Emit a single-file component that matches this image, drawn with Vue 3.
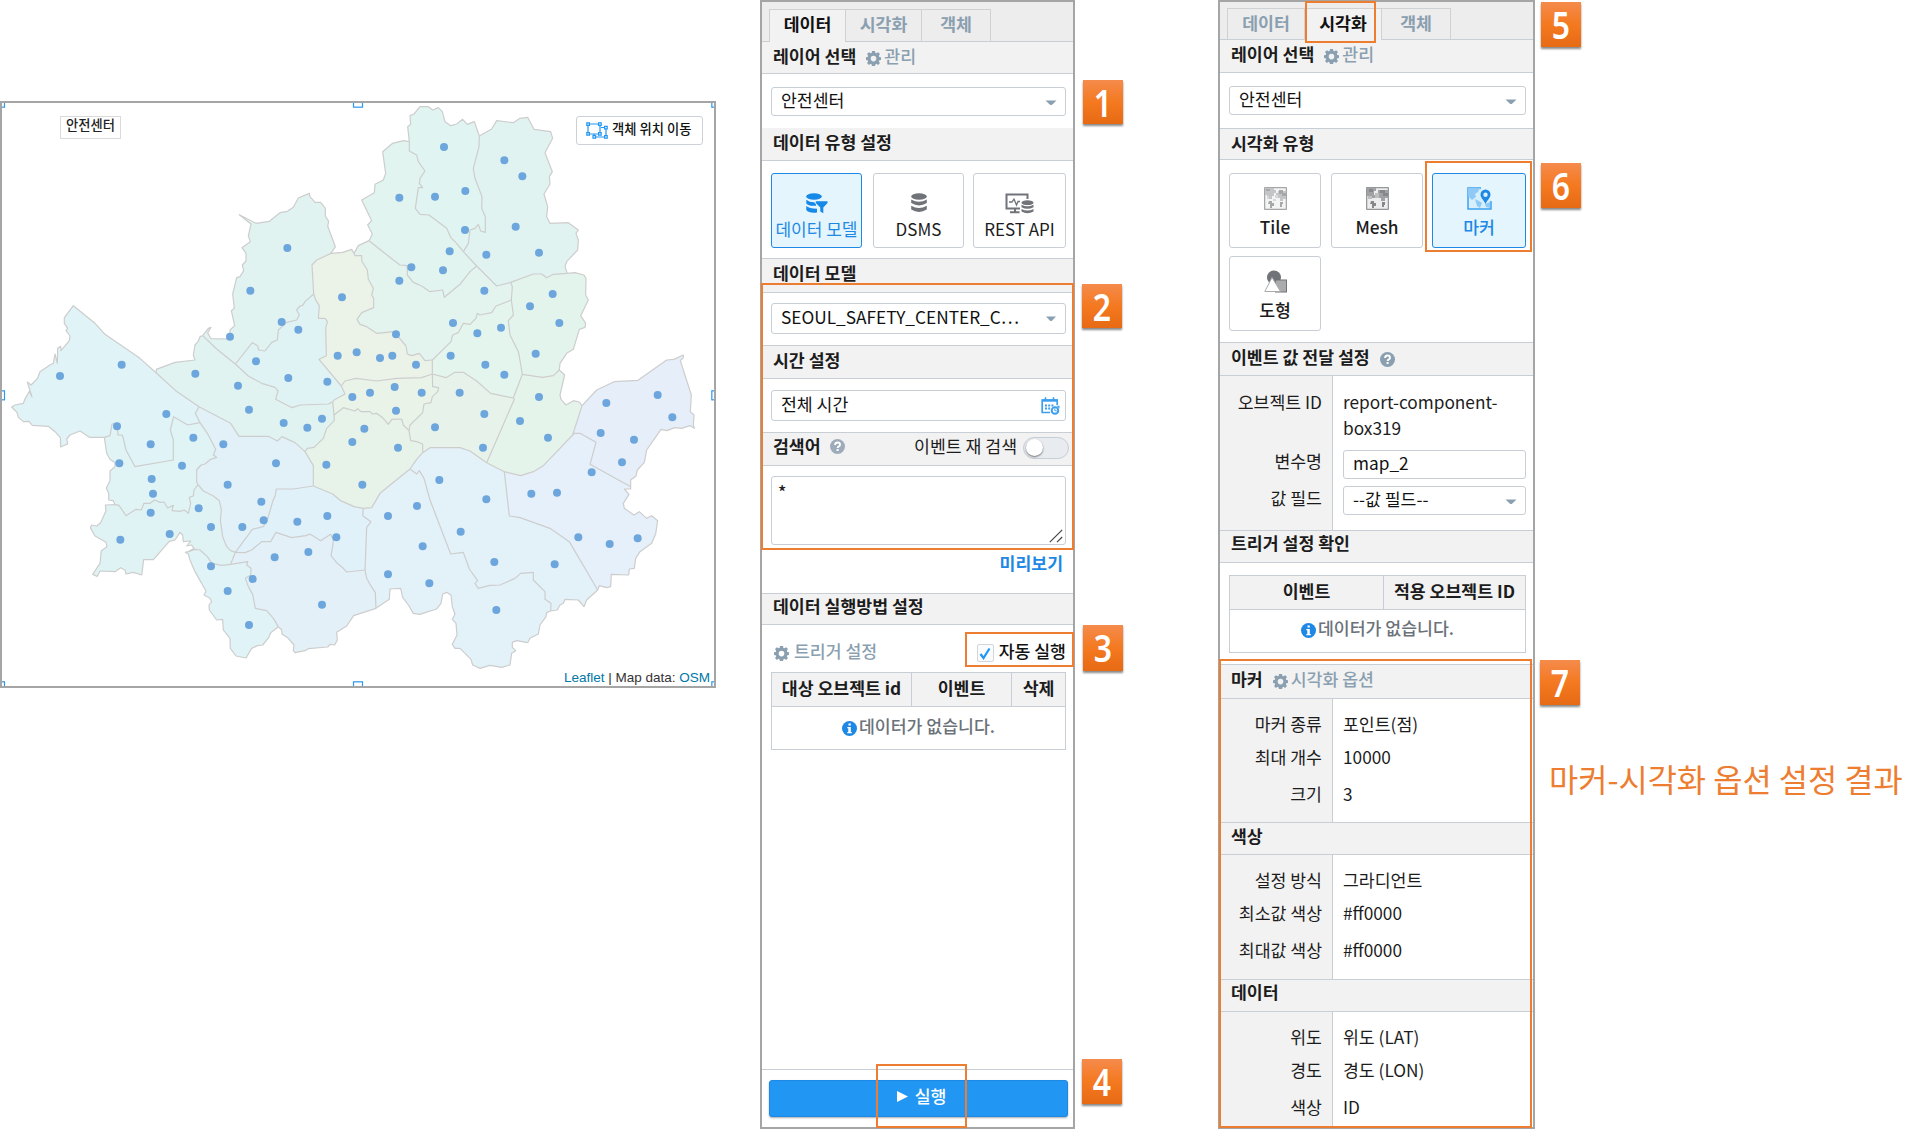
<script setup>
// Shared borders between districts; every border is stored once and reused by both neighbours.
const arcs = {
  gsOut: '313,1042 268,1042 240,1023 210,1035 200,1047 203,1062 182,1071 181,1043 165,1025 145,1009 97,1006 87,994 70,995 55,982 51,967 35,951 45,945 70,940 76,925 88,904 96,921 82,876 93,885 112,866 120,845 150,825 160,820 165,792 172,820 173,775 182,769 183,782 208,752 210,738 198,722 203,715 193,700 193,683 220,647 285,700 315,733 420,805 469,849',
  gsMp: '469,849 527,902 597,950',
  gsYd: '597,950 586,970 600,998',
  gsYc: '600,998 563,1005 521,980 511,1020 520,1050 520,1110 405,1130 378,1080 370,1045 366,1035 354,1035 352,1010 345,1000 336,1002 330,1037 313,1042',
  ycOut: '313,1042 320,1090 330,1108 345,1118 345,1130 330,1143 330,1172 319,1194 326,1210 326,1230 340,1232 345,1244',
  ycGr: '345,1244 357,1246 378,1277 408,1258 424,1260 432,1240 450,1240 464,1230 480,1237 492,1236 503,1254 520,1246 516,1262 540,1264 553,1260 565,1270 572,1240 568,1222 580,1218 582,1200 594,1184',
  ycYd: '594,1184 590,1175 590,1140 603,1125 615,1122 632,1108 650,1102 640,1095 647,1078 622,1030 600,998',
  grYd: '594,1184 610,1203 640,1218 658,1232 664,1260 661,1290 668,1340 680,1370 692,1382 706,1387',
  grGw: '706,1387 692,1423',
  gcGw: '692,1423 743,1415 740,1425 753,1435 752,1455 736,1465 745,1490 758,1513 766,1555 800,1562 820,1585 835,1610',
  grGc: '692,1423 665,1426 636,1420 622,1400 600,1380 585,1378 565,1385',
  grOut: '565,1385 582,1375 575,1365 560,1368 572,1353 550,1355 548,1335 540,1327 525,1350 508,1354 460,1409 431,1409 425,1455 400,1447 378,1452 375,1440 362,1433 345,1445 300,1443 292,1459 278,1453 300,1420 304,1382 321,1370 318,1357 285,1338 271,1313 275,1305 290,1308 302,1298 318,1262 316,1245 345,1244',
  gcOut: '835,1610 812,1628 806,1643 788,1665 772,1667 755,1675 738,1704 708,1698 691,1675 690,1645 670,1620 668,1588 650,1590 628,1560 627,1545 635,1535 630,1525 612,1515 618,1504 605,1480 585,1445 570,1410 565,1392 556,1387 565,1385',
  gwOut: '835,1610 845,1620 846,1632 865,1645 882,1665 880,1682 885,1688 915,1682 925,1676 983,1671 990,1663 1004,1665 1012,1650 1010,1627 1040,1608 1061,1577 1128,1555',
  gwSc: '1128,1555 1126,1508 1108,1480 1100,1465 1095,1440',
  djGw: '706,1387 735,1388 755,1380 785,1355 812,1355 828,1327 855,1336 875,1343 918,1337 930,1332 962,1352 992,1333 1000,1350 998,1370 993,1397 1012,1420 1030,1435 1040,1446 1095,1440',
  djSc: '1095,1440 1100,1312 1113,1295 1088,1277 1090,1255',
  djYs: '940,1188 998,1212 1022,1232 1062,1250 1090,1255',
  djYd: '940,1188 880,1197 829,1197 826,1215 818,1235 802,1290 790,1310 757,1318 706,1387',
  ydYs: '940,1188 940,1127 915,1085',
  ydMp: '915,1085 885,1058 846,1040 832,1053 805,1039 717,1039 692,1000 597,950',
  mpYs: '915,1085 922,1075 942,1072 970,1045 980,1015 1003,992 1002,975',
  mpJu: '1002,975 998,935',
  mpSd: '998,935 985,942 900,945 876,953 827,928 834,903 825,892 785,880 745,858 706,822',
  mpEp: '706,822 650,777 608,737',
  mpOut: '469,849 469,838 525,817 585,810 580,795 585,765 594,755 600,740 608,737',
  epOut: '608,737 625,715 633,712 623,728 633,746 690,747 690,720 704,707 694,662 703,655 698,612 710,563 720,560 731,542 727,525 738,513 738,490 726,473 751,455 745,438 753,402 718,374 768,400 808,394 840,368 862,364 880,352 895,324 928,310 930,320 945,337 962,337 976,355 976,378 986,394 983,408 1006,470 993,490',
  epJn: '993,490 950,510 936,525 941,612',
  epSd: '941,612 915,635 908,646 900,648 890,660 898,675 890,690 860,697 835,720 832,750 815,757 795,783 776,780 773,767 757,758 706,822',
  sdJn: '941,612 948,632 958,647 955,685 975,685 982,695 977,715 979,797 957,808 1024,888',
  sdJu: '1024,888 1035,912 1002,930 998,935',
  jnJu: '1024,888 1035,873 1068,865 1130,873 1190,865 1265,863 1297,852',
  jnOut: '993,490 1028,487 1055,478 1062,490',
  jnSb: '1062,490 1065,497 1085,497 1085,513 1102,540 1105,568 1120,595 1115,615 1121,625 1121,653 1085,668 1071,688 1080,703 1100,710 1130,730 1182,725 1218,768 1222,792 1235,797 1258,790 1275,812 1297,810',
  jnDd: '1297,810 1297,852',
  sbOut: '1062,490 1075,467 1107,452',
  sbGb: '1107,452 1180,510 1200,525 1222,527 1222,555 1240,577 1265,588 1290,605 1328,600 1333,622 1380,583 1410,545 1430,528',
  sbNw: '1430,528 1490,588 1532,577',
  gbNw: '1390,485 1430,528',
  gbOut: '1107,452 1117,432 1103,405 1115,392 1085,330 1123,308 1125,283 1150,270 1157,250 1148,185 1178,160 1210,152 1228,155',
  gbDb: '1228,155 1228,183 1250,195 1255,215 1275,243 1260,265 1258,280 1268,293 1255,293 1246,355 1260,373 1287,375 1340,415 1352,442 1370,460 1390,485',
  dbOut: '1228,155 1223,110 1232,103 1230,77 1242,72 1260,50 1285,50 1298,60 1315,53 1327,65 1335,95 1352,107 1370,102 1388,88 1402,103 1423,95 1438,138',
  dbNw: '1438,138 1437,170 1420,235 1425,265 1446,320 1445,355 1456,380 1456,427 1442,423 1435,403 1425,415 1410,420 1405,460 1390,485',
  nwOut: '1438,138 1475,117 1490,92 1540,98 1560,85 1583,82 1602,118 1652,125 1658,145 1635,188 1657,245 1648,260 1650,282 1632,312 1643,350 1640,380 1650,400 1705,398 1735,420 1728,430 1735,450 1733,480 1700,515 1695,530 1702,550',
  nwJr: '1532,577 1600,552 1625,552 1640,563 1660,553 1702,550',
  jrOut: '1702,550 1725,548 1752,555 1758,565 1757,615 1765,630 1742,677 1757,700 1755,712 1738,718 1720,778 1700,790 1680,820 1678,840',
  jrGj: '1678,840 1660,857 1628,862 1567,853',
  sbJr: '1532,577 1537,590 1534,630',
  jrDd: '1534,630 1540,675 1525,692 1530,735 1555,785 1558,800 1567,853',
  sbDd: '1534,630 1488,648 1475,668 1440,675 1432,670 1428,685 1410,703 1390,700 1375,728 1358,735 1353,755 1297,810',
  ddSd: '1297,852 1338,863 1365,847 1390,847 1430,873 1472,910 1540,924',
  ddGj: '1540,924 1567,853',
  juSd: '1297,852 1298,890 1316,893 1313,905 1297,920 1293,938 1272,942 1268,968 1230,1005 1227,1022',
  juYs: '1002,975 1030,953 1065,963 1073,956 1083,965 1110,965 1118,972 1130,970 1148,983 1165,1003 1175,988 1205,987 1210,1005 1227,1022',
  ysSd: '1227,1022 1232,1052 1250,1055 1268,1062 1268,1088',
  ysSc: '1230,1137 1140,1210 1115,1253 1090,1255',
  ysGn: '1268,1088 1250,1108 1230,1137',
  sdGn: '1268,1088 1290,1073 1380,1073 1410,1083 1460,1118',
  sdGj: '1540,924 1543,928 1460,1118',
  gjGn: '1460,1118 1513,1145',
  gjSp: '1513,1145 1562,1157 1600,1145 1630,1127 1718,1035',
  gjGd: '1718,1035 1746,947',
  gjOut: '1678,840 1694,855 1680,915 1683,928 1698,945 1720,932 1738,936 1746,947',
  gdOut: '1746,947 1790,900 1842,875 1914,871 2000,810 2022,808 2050,795 2050,803 2041,812 2074,915 2071,965 2082,975 2080,1005 2083,1015 2070,1007 2045,1015 2025,1013 2000,1022 1983,1018 1940,1080 1933,1117 1912,1140 1908,1158 1892,1170 1892,1190',
  gdSp: '1718,1035 1723,1030 1740,1030 1788,1057 1770,1123 1892,1190',
  spOut: '1892,1190 1892,1197 1873,1197 1887,1213 1870,1240 1873,1255 1902,1275 1918,1265 1940,1285 1955,1277 1973,1292 1967,1332 1955,1360 1920,1385 1907,1405 1903,1435 1888,1437 1886,1455 1834,1453 1832,1490 1820,1493 1798,1487 1793,1500',
  spGn: '1513,1145 1528,1278 1560,1283 1650,1315 1708,1355 1793,1500',
  gnOut: '1793,1500 1760,1530 1752,1550 1735,1530 1695,1528 1690,1540 1680,1545 1672,1560 1652,1563',
  gnSc: '1230,1137 1250,1152 1258,1142 1272,1165 1290,1230 1352,1392 1390,1387 1408,1437 1433,1472 1425,1480 1435,1495 1470,1486 1500,1485 1545,1465 1562,1450 1600,1447 1600,1470 1635,1505 1635,1528 1653,1540 1652,1563',
  scOut: '1652,1563 1640,1568 1638,1580 1620,1605 1615,1632 1590,1645 1583,1658 1550,1652 1537,1657 1537,1672 1547,1682 1535,1690 1530,1725 1505,1732 1470,1726 1440,1735 1418,1725 1413,1708 1380,1675 1365,1675 1357,1663 1371,1635 1368,1600 1357,1588 1365,1572 1357,1550 1353,1515 1340,1507 1328,1512 1323,1540 1310,1557 1275,1568 1260,1573 1240,1570 1225,1545 1208,1522 1202,1495 1170,1497 1168,1528 1150,1540 1128,1555',
}

const districts = [
  ['#e0f3f6', 'gsOut gsMp gsYd gsYc'],
  ['#e0f3f5', 'gsYc ycOut ycGr ycYd'],
  ['#e0f3f4', 'ycGr grYd grGw grGc grOut'],
  ['#e0f3f6', 'grGc gcGw gcOut'],
  ['#e2f1f7', 'gsYd ycYd grYd djYd ydYs ydMp'],
  ['#e1f1fa', 'djYd djYs djSc djGw'],
  ['#e3f0f7', 'grGw djGw gwSc gwOut gcGw'],
  ['#e3f1f9', 'gwSc djSc ysSc gnSc scOut'],
  ['#e3f1f9', 'gnSc ysGn sdGn gjGn spGn gnOut'],
  ['#e5f0fa', 'spGn gjSp gdSp spOut'],
  ['#e6eef9', 'gjGd gdOut gdSp'],
  ['#e0f3f1', 'mpOut mpEp mpSd mpJu mpYs ydMp gsMp'],
  ['#e0f3f4', 'mpSd epSd sdJn sdJu'],
  ['#e0f3f1', 'epOut epJn epSd mpEp'],
  ['#ebf3e8', 'epJn jnOut jnSb jnDd jnJu sdJn'],
  ['#e9f3e8', 'sdJu jnJu juSd juYs mpJu'],
  ['#e7f3e8', 'mpYs juYs ysSd ysGn ysSc djYs ydYs'],
  ['#e7f3ea', 'juSd ddSd sdGj sdGn ysSd'],
  ['#e5f4ea', 'ddGj jrGj gjOut gjGd gjSp gjGn sdGj'],
  ['#e4f5ee', 'sbDd jrDd ddGj ddSd jnDd'],
  ['#e3f4ed', 'nwJr jrOut jrGj jrDd sbJr'],
  ['#e3f4ef', 'sbOut sbGb sbNw sbJr sbDd jnSb'],
  ['#e1f4f0', 'gbOut gbDb gbNw sbGb'],
  ['#e0f4f1', 'dbOut dbNw gbDb'],
  ['#e0f3f1', 'nwOut nwJr sbNw gbNw dbNw'],
].map(([fill, names]) => ({ fill, points: joinArcs(names.split(' ')) }))

function joinArcs(names) {
  const parts = names.map((n) => arcs[n].split(' '))
  const touches = (p, part) => part[0] === p || part[part.length - 1] === p
  let ring = parts[0]
  if (!touches(ring[ring.length - 1], parts[1])) ring = [...ring].reverse()
  for (const part of parts.slice(1)) {
    ring = ring.concat(part[0] === ring[ring.length - 1] ? part : [...part].reverse())
  }
  return ring.join(' ')
}

const centers = (
  '862,474 751,602 845,696 895,719 690,740 365,824 180,858 586,851 768,814 865,864 714,887 982,875 1026,622 1013,797 1070,787 1057,921 ' +
  '1332,171 1513,211 1567,259 1198,323 1305,320 1396,303 1395,420 1547,410 1459,494 1617,488 1349,484 1234,532 1329,541 1198,572 1453,602 1658,612 1590,649 1678,699 1359,699 1432,730 1503,713 1188,733 1140,804 1177,797 1248,824 1352,797 1607,791 1456,824 1513,854 1184,891 1110,908 1265,908 1379,908 1617,921 1973,915 ' +
  '499,972 351,1009 452,1063 580,1043 358,1120 546,1127 455,1167 459,1211 452,1268 361,1349 509,1332 596,1255 633,1311 670,1063 747,959 851,999 922,1013 966,986 828,1120 683,1184 784,1235 791,1291 727,1311 892,1295 982,1278 1009,1342 979,1124 1057,1056 1093,1016 1087,1184 824,1402 925,1386 758,1467 633,1429 683,1503 747,1605 966,1544 ' +
  '1188,962 1305,1012 1194,1073 1453,972 1560,993 1644,1043 1449,1073 1318,1170 1251,1248 1164,1278 1459,1228 1382,1325 1268,1369 1164,1453 1288,1480 1483,1416 1489,1560 1664,1423 1594,1211 1671,1208 1775,1147 1735,1342 1829,1362 1913,1345 1802,1029 1902,1049 1866,1117 1819,939 2017,982'
).split(' ').map((p) => p.split(',').map(Number))

const handles = [[-15, 23], [1059, 23], [2134, 23], [-15, 901], [2134, 901], [-15, 1774], [1059, 1774], [2134, 1774]]

const markerRows = [['마커 종류', '포인트(점)'], ['최대 개수', '10000'], ['크기', '3']]
const colorRows = [['설정 방식', '그라디언트'], ['최소값 색상', '#ff0000'], ['최대값 색상', '#ff0000']]
const dataRows = [['위도', '위도 (LAT)'], ['경도', '경도 (LON)'], ['색상', 'ID']]

const gear = 'M6.400 0h3.200l.4 2 1.100.5 1.800-1.200 2 2-1.200 1.800.5 1.300 2 .3v2.800l-2 .3-.5 1.300 1.200 1.800-2 2-1.800-1.200-1.100.6-.4 2H6.400l-.4-2-1.100-.6-1.800 1.200-2-2 1.200-1.800-.5-1.300-2-.3V6.700l2-.3.5-1.300L1.100 3.300l2-2 1.800 1.200L6 2zM8 5.100a3 3 0 1 0 0 6 3 3 0 0 0 0-6z'
</script>

<template>
  <main class="page">
    <section class="map">
      <svg class="map-canvas" width="712" height="583" viewBox="6 39 2136 1749">
        <polygon v-for="(d, i) in districts" :key="i" :points="d.points" :fill="d.fill" />
        <polyline v-for="(p, k) in arcs" :key="k" :points="p" class="border" />
        <circle v-for="(c, i) in centers" :key="'c' + i" :cx="c[0]" :cy="c[1]" r="12" fill="#6ca6dd" />
        <rect v-for="(h, i) in handles" :key="'h' + i" :x="h[0] + 1.5" :y="h[1] + 1.5" width="27" height="27" class="handle" />
      </svg>
      <div class="map-label">안전센터</div>
      <div class="map-move">
        <svg width="22" height="17" viewBox="0 0 22 17" fill="none" stroke="#2196f3" stroke-width="1.2">
          <path d="M3 2h10M2 3v8M3 12h10M14 3v8M15 5.500h4M20 7v7M9 15h9M8 12.500v2" />
          <g fill="#fff"><path d="M.8.8h2.600v2.600H.8zM12.600.8h2.600v2.600h-2.600zM.8 10.600h2.600v2.600H.8zM12.600 10.600h2.600v2.600h-2.600zM18.600 4.300h2.600v2.600h-2.600zM18.600 13.600h2.600v2.600h-2.600zM7 13.600h2.600v2.600H7z" /></g>
        </svg>
        <span>객체 위치 이동</span>
      </div>
      <div class="credit"><span class="link">Leaflet</span> | Map data: <span class="link">OSM</span></div>
    </section>

    <section class="panel data-panel">
      <nav class="tabs">
        <span class="tab active">데이터</span><span class="tab">시각화</span><span class="tab last">객체</span>
      </nav>
      <header class="head d-layer">레이어 선택
        <span class="tool"><svg width="15" height="15" viewBox="0 0 16 16"><path :d="gear" fill-rule="evenodd" /></svg>관리</span>
      </header>
      <div class="body d-b1">
        <div class="field h29">안전센터<svg class="caret" width="12" height="6" viewBox="0 0 12 6"><path d="M.5.5h11L7 4.700q-1 .8-2 0z" /></svg></div>
      </div>
      <header class="head d-type">데이터 유형 설정</header>
      <div class="body cards d-b2">
        <div class="card on">
          <svg width="22" height="21" viewBox="0 0 22 21" fill="#1588e8">
            <ellipse cx="8" cy="3.500" rx="7.800" ry="3.200" />
            <path d="M.3 6.800q3 2.600 8 2.500l1.700 2.200v1.200Q3 13.500.3 10.500zM.3 13q2.500 2.500 10.700 2.700v3.800Q3 20.500.3 17z" />
            <path d="M9.800 8.300H21.500V10l-4.200 4.500v5.800l-3-1.900v-3.900L9.800 10z" />
          </svg>
          <span>데이터 모델</span>
        </div>
        <div class="card">
          <svg width="16" height="21" viewBox="0 0 16 21" fill="#707378">
            <ellipse cx="8" cy="3.500" rx="7.800" ry="3.300" />
            <path d="M.2 6.500q7.800 4.500 15.600 0V10q-7.800 4.800-15.600 0zM.2 12.800q7.800 4.500 15.600 0v3.700q-7.800 4.800-15.600 0z" />
          </svg>
          <span>DSMS</span>
        </div>
        <div class="card wide">
          <svg width="29" height="21" viewBox="0 0 29 21">
            <path d="M15 15.500H1.500V1.500h21V6M10 16v3M5 19.200h9.500" fill="none" stroke="#707378" stroke-width="2" />
            <path d="M4 9h3l2-3 2.500 6L13 8.500h2" fill="none" stroke="#707378" stroke-width="1.300" />
            <ellipse cx="22.500" cy="9.700" rx="6" ry="2.400" fill="#707378" />
            <path d="M16.500 11.800q6 3 12 0v2.400q-6 3-12 0zM16.500 16q6 3 12 0v2.600q-6 3.200-12 0z" fill="#707378" />
          </svg>
          <span>REST API</span>
        </div>
      </div>
      <header class="head d-model">데이터 모델</header>
      <div class="body d-b3">
        <div class="field h31">SEOUL_SAFETY_CENTER_C⋯<svg class="caret" width="12" height="6" viewBox="0 0 12 6"><path d="M1 .5h10L7 4.700q-1 .8-2 0z" /></svg></div>
      </div>
      <header class="head d-time">시간 설정</header>
      <div class="body d-b4">
        <div class="field h31">전체 시간
          <svg class="calendar" width="19" height="19" viewBox="0 0 19 19" fill="none" stroke="#3c9fee">
            <path d="M9 15.500H1.200V3.200h15V8" stroke-width="1.700" /><path d="M1 3.500h15.500" stroke-width="2.400" />
            <path d="M4.500.3V4M12.500.3V4" stroke-width="1.600" />
            <path d="M4 8.500h9M4 11.500h6" stroke-width="1.800" stroke-dasharray="2 1.200" />
            <circle cx="14" cy="13.500" r="3.300" stroke-width="2" /><path d="M13.800 11.500v2.200l2 .2" stroke-width="1" /><path d="M15.500 8.800h3v3z" fill="#3c9fee" stroke="none" />
          </svg>
        </div>
      </div>
      <header class="head d-query">
        <span>검색어</span>
        <svg class="help" width="15" height="15" viewBox="0 0 15 15"><circle cx="7.500" cy="7.500" r="7.500" /><path d="M5 6q.2-2.500 2.600-2.500T10 5.700q0 1-1.200 1.700-1.200.6-1.200 1.700" fill="none" stroke="#fff" stroke-width="1.900" /><rect x="6.600" y="10" width="2" height="2" fill="#fff" /></svg>
        <span class="requery">이벤트 재 검색</span>
        <span class="toggle"><i></i></span>
      </header>
      <div class="body d-b5">
        <div class="textarea">*<svg class="grip" width="14" height="14" viewBox="0 0 14 14"><path d="M.8 13.200 13.200.8M8 13.200 13.200 8" stroke="#444" stroke-width="1.200" /></svg></div>
        <div class="preview">미리보기</div>
      </div>
      <header class="head d-exec">데이터 실행방법 설정</header>
      <div class="body d-b6">
        <div class="trigger-row">
          <span class="tool"><svg width="15" height="15" viewBox="0 0 16 16"><path :d="gear" fill-rule="evenodd" /></svg>트리거 설정</span>
          <span class="auto"><i class="check"><svg width="12" height="13" viewBox="0 0 12 13"><path d="M1.500 7 4.500 11 10.500 1.500" fill="none" stroke="#2196f3" stroke-width="2.200" /></svg></i>자동 실행</span>
        </div>
        <div class="table">
          <div class="thead"><span class="t1">대상 오브젝트 id</span><span class="t2">이벤트</span><span>삭제</span></div>
          <div class="empty"><svg width="15" height="15" viewBox="0 0 15 15"><circle cx="7.500" cy="7.500" r="7.500" fill="#1e88e5" /><path d="M6.500 2.500h2.300v2H6.500zM5.300 6h3.500v5h1v1.300H5.300V11h1V7.300h-1z" fill="#fff" /></svg>데이터가 없습니다.</div>
        </div>
      </div>
      <footer class="foot">
        <div class="run"><svg width="11" height="11" viewBox="0 0 11 11"><path d="M0 0 11 5.500 0 11z" fill="#fff" /></svg>실행</div>
      </footer>
    </section>

    <section class="panel view-panel">
      <nav class="tabs">
        <span class="tab">데이터</span><span class="tab active">시각화</span><span class="tab last">객체</span>
      </nav>
      <header class="head v-layer">레이어 선택
        <span class="tool"><svg width="15" height="15" viewBox="0 0 16 16"><path :d="gear" fill-rule="evenodd" /></svg>관리</span>
      </header>
      <div class="body v-b1">
        <div class="field h29">안전센터<svg class="caret" width="12" height="6" viewBox="0 0 12 6"><path d="M.5.5h11L7 4.700q-1 .8-2 0z" /></svg></div>
      </div>
      <header class="head v-viz">시각화 유형</header>
      <div class="body cards v-b2">
        <div class="card">
          <svg width="23" height="23" viewBox="0 0 23 23">
            <rect x=".7" y=".7" width="21.600" height="21.600" fill="#f4f4f4" stroke="#909295" />
            <path d="M1 1h9v2h2v3h-2v3H8v3H5v-2H3V8H1zM14 4h8v8h-3v2h-3v-3h-2V9h-2V6h2z" fill="#c3c5c6" />
            <path d="M15 3h4v3h3v3h-4V7h-3zM5 14h3v2h2v3H8v2H6v-4H4zM16 15h3v2h-1v3h-2zM2 2h4v2H2z" fill="#a6a8aa" />
            <path d="M9 12h3v2H9zM11 8h3v3h-3zM3 9h2v3H3z" fill="#d8d9da" />
          </svg>
          <span>Tile</span>
        </div>
        <div class="card">
          <svg width="23" height="23" viewBox="0 0 23 23">
            <rect x=".7" y=".7" width="21.600" height="21.600" fill="#ededee" stroke="#7d7f82" />
            <path d="M1 1h9v3H8v4h3v3H6V9H1zM12 3h10v8h-3v3h-4v-3h-3z" fill="#a0a2a5" />
            <path d="M14 3h5v3h3v3h-5V6h-3zM5 14h3v2h2v3H8v2H6v-4H4zM16 15h3v3h-1v2h-2zM3 2h4v3H3z" fill="#85878a" />
            <path d="M9 6h4v5H9zM2 9h4v3H2z" fill="#bfc0c2" />
          </svg>
          <span>Mesh</span>
        </div>
        <div class="card wide on">
          <svg width="25" height="23" viewBox="0 0 25 23">
            <path d="M14 1H1v21h23V14" fill="#d6effd" stroke="#3ba2f0" stroke-width="1.500" />
            <path d="M1 1h12l-2 4-3 2 1 3-4 3-4-4zM8 12l4 2 3 2-2 5-3-2zM18 17l5-2v6l-4-1z" fill="#8fcaf7" />
            <path d="M18.500 2.500a5 5 0 0 0-5 5.200c0 3 3.200 5 5 9.300 1.800-4.300 5-6.300 5-9.300a5 5 0 0 0-5-5.200zm0 3a2.200 2.200 0 1 1 0 4.400 2.200 2.200 0 0 1 0-4.400z" fill="#1e88e5" fill-rule="evenodd" />
          </svg>
          <span>마커</span>
        </div>
        <div class="card">
          <svg width="23" height="23" viewBox="0 0 23 23">
            <circle cx="10" cy="7.500" r="7" fill="#707378" /><rect x="11.500" y="10" width="11" height="12" fill="#a9abad" stroke="#707378" />
            <path d="M8 7.500 16.500 21.500H.8z" fill="#fff" stroke="#a9abad" />
          </svg>
          <span>도형</span>
        </div>
      </div>
      <header class="head v-event">이벤트 값 전달 설정
        <svg class="help dark" width="15" height="15" viewBox="0 0 15 15"><circle cx="7.500" cy="7.500" r="7.500" /><path d="M5 6q.2-2.500 2.600-2.500T10 5.700q0 1-1.200 1.700-1.200.6-1.200 1.700" fill="none" stroke="#fff" stroke-width="1.900" /><rect x="6.600" y="10" width="2" height="2" fill="#fff" /></svg>
      </header>
      <div class="pairs v-p1">
        <div class="keys"><span class="two">오브젝트 ID</span><span>변수명</span><span>값 필드</span></div>
        <div class="vals">
          <span class="two">report-component-box319</span>
          <div class="field h29">map_2</div>
          <div class="field h29">--값 필드--<svg class="caret" width="12" height="6" viewBox="0 0 12 6"><path d="M.5.5h11L7 4.700q-1 .8-2 0z" /></svg></div>
        </div>
      </div>
      <header class="head v-trig">트리거 설정 확인</header>
      <div class="body v-b3">
        <div class="table">
          <div class="thead"><span class="t1">이벤트</span><span>적용 오브젝트 ID</span></div>
          <div class="empty"><svg width="15" height="15" viewBox="0 0 15 15"><circle cx="7.500" cy="7.500" r="7.500" fill="#1e88e5" /><path d="M6.500 2.500h2.300v2H6.500zM5.300 6h3.500v5h1v1.300H5.300V11h1V7.300h-1z" fill="#fff" /></svg>데이터가 없습니다.</div>
        </div>
      </div>
      <header class="head v-marker">마커
        <span class="tool"><svg width="15" height="15" viewBox="0 0 16 16"><path :d="gear" fill-rule="evenodd" /></svg>시각화 옵션</span>
      </header>
      <div class="pairs v-p2">
        <div class="keys"><span v-for="r in markerRows" :key="r[0]">{{ r[0] }}</span></div>
        <div class="vals"><span v-for="r in markerRows" :key="r[0]">{{ r[1] }}</span></div>
      </div>
      <header class="head v-color">색상</header>
      <div class="pairs v-p3">
        <div class="keys"><span v-for="r in colorRows" :key="r[0]">{{ r[0] }}</span></div>
        <div class="vals"><span v-for="r in colorRows" :key="r[0]">{{ r[1] }}</span></div>
      </div>
      <header class="head v-data">데이터</header>
      <div class="pairs v-p4">
        <div class="keys"><span v-for="r in dataRows" :key="r[0]">{{ r[0] }}</span></div>
        <div class="vals"><span v-for="r in dataRows" :key="r[0]">{{ r[1] }}</span></div>
      </div>
    </section>

    <p class="caption">마커-시각화 옵션 설정 결과</p>

    <!-- callout frames and step badges lying over the panels -->
    <i class="frame f2"></i><i class="frame f3"></i><i class="frame f4"></i>
    <i class="frame f5"></i><i class="frame f6"></i><i class="frame f7"></i>
    <b class="badge b1"><span>1</span></b>
    <b class="badge b2"><span>2</span></b>
    <b class="badge b3"><span>3</span></b>
    <b class="badge b4"><span>4</span></b>
    <b class="badge b5"><span>5</span></b>
    <b class="badge b6"><span>6</span></b>
    <b class="badge b7"><span>7</span></b>
  </main>
</template>

<style>
html, body { margin: 0; background: #fff; }
</style>

<style scoped>
* { box-sizing: border-box; }
.page {
  position: relative; display: flex; align-items: flex-start;
  width: 1931px; height: 1129px; overflow: hidden; background: #fff;
  font-family: "Noto Sans CJK KR", "Noto Sans", sans-serif; font-size: 17.25px; color: #1c1c1c;
}
.map { position: relative; width: 716px; height: 587px; margin-top: 101px; border: 2px solid #a5a5a5; flex: none; }
.map-canvas { display: block; }
.border { fill: none; stroke: #cdcdcd; stroke-width: 3.6; stroke-linejoin: round; }
.handle { fill: #fff; stroke: #2d97ee; stroke-width: 3.6; }
.map-label {
  position: absolute; left: 58px; top: 13px; width: 61px; height: 23px; border: 1px solid #dadada; background: #fff;
  font-size: 13.3px; font-weight: 500; line-height: 16px; text-align: center; color: #222;
}
.map-move {
  position: absolute; left: 574px; top: 13px; width: 127px; height: 29px; border: 1px solid #ccd1d7; border-radius: 3px; background: #fff;
  display: flex; gap: 4px; padding: 5px 0 0 9px; font-size: 13.3px; font-weight: 500; line-height: 14px; white-space: nowrap; color: #111;
}
.credit { position: absolute; right: 4px; bottom: 0; font: 13.5px/16px "Liberation Sans", sans-serif; color: #333; white-space: nowrap; }
.link { color: #0078a8; }

.panel { height: 1129px; border: 2px solid #a5a5a5; flex: none; background: #fff; display: flex; flex-direction: column; }
.data-panel { width: 315px; margin-left: 44px; }
.view-panel { width: 317px; margin-left: 143px; }

.tabs { display: flex; flex: none; padding-left: 7px; background: #ededed; border-bottom: 1px solid #c8ced5; }
.data-panel .tabs { height: 40px; padding-top: 7px; }
.view-panel .tabs { height: 38px; padding-top: 6px; }
.tab {
  width: 78px; margin-right: -1px; border: 1px solid #cfd1d3; border-bottom: 0; text-align: center;
  font-weight: 700; color: #8a9fb0; line-height: 28px;
}
.data-panel .tab { width: 77px; }
.view-panel .tab { line-height: 27px; }
.data-panel .tab.last, .view-panel .tab.last { width: 70px; }
.tab.active { margin-bottom: -1px; background: #f2f2f2; color: #111; }

.head {
  flex: none; display: flex; padding: 0 4px 0 11px; background: #f2f2f2; font-weight: 700; white-space: nowrap;
  border-top: 1px solid #c8ced5; border-bottom: 1px solid #c8ced5;
}
.tool { display: flex; align-items: flex-start; font-weight: 500; color: #8a9fb0; gap: 3px; }
.tool svg { fill: #8a9fb0; margin-top: 9px; }
.head .tool { margin-left: 10px; }
.d-layer { height: 32px; line-height: 25px; border-top: 0; padding-top: 1px; }
.d-layer .tool svg { margin-top: 8px; }
.d-type { height: 33px; line-height: 26px; border-top: 0; padding-top: 1px; }
.d-model { height: 35px; line-height: 27px; }
.d-time { height: 34px; line-height: 27px; }
.d-query { height: 34px; line-height: 26px; }
.d-exec { height: 32px; line-height: 22px; padding-top: 1px; }
.v-layer { height: 33px; line-height: 27px; border-top: 0; }
.v-viz { height: 32px; line-height: 26px; padding-top: 1px; }
.v-event { height: 34px; line-height: 26px; padding-top: 1px; }
.v-trig { height: 33px; line-height: 24px; }
.v-marker { height: 35px; line-height: 27px; }
.v-color { height: 33px; line-height: 25px; }
.v-data { height: 33px; line-height: 24px; }

.body { flex: none; padding: 0 7px 0 9px; }
.d-b1 { height: 54px; padding-top: 13px; }
.d-b2 { height: 97px; padding-top: 12px; }
.d-b3 { height: 52px; padding-top: 10px; }
.d-b4 { height: 53px; padding-top: 11px; }
.d-b5 { height: 127px; padding-top: 10px; }
.d-b6 { height: 444px; padding-top: 12px; }
.v-b1 { height: 55px; padding-top: 13px; }
.v-b2 { height: 182px; padding-top: 13px; }
.v-b3 { height: 101px; padding-top: 12px; }

.field {
  display: flex; justify-content: space-between; border: 1px solid #c8ced5; border-radius: 3px; background: #fff;
  padding: 0 8px 0 9px; line-height: 24px; white-space: nowrap; color: #111;
}
.h29 { height: 29px; }
.h31 { height: 31px; line-height: 26px; }
.caret { margin-top: 12px; fill: #8a9fb0; }
.calendar { margin: 6px -3px 0 0; }

.cards { display: flex; flex-wrap: wrap; align-content: flex-start; gap: 8px 11px; }
.view-panel .cards { column-gap: 10px; }
.card {
  width: 91px; height: 75px; border: 1px solid #c8ced5; border-radius: 3px; display: flex; flex-direction: column;
  align-items: center; padding-top: 19px; font-weight: 500; white-space: nowrap;
}
.card span { line-height: 24px; margin-top: 3px; }
.data-panel .card { font-weight: 400; font-size: 17px; }
.data-panel .card.wide { width: 93px; margin-left: -2px; }
.view-panel .card { width: 92px; padding-top: 13px; }
.view-panel .card span { margin-top: 5px; }
.view-panel .card.wide { width: 94px; margin-left: -1px; }
.card.on { border: 1.500px solid #1e88e5; background: #e5f5fe; color: #1e88e5; }

.help { fill: #9eabba; margin: 6px 0 0 9px; }
.help.dark { fill: #8a9fb0; margin: 8px 0 0 10px; }
.requery { margin-left: auto; font-weight: 400; }
.toggle { width: 46px; height: 22px; margin: 4px 0 0 6px; border: 1px solid #c8ced5; border-radius: 11px; background: #e8ebf0; }
.toggle i { display: block; width: 17px; height: 17px; margin: 1px 0 0 2px; border-radius: 50%; background: #fff; box-shadow: 0 1px 2px #0008; }

.textarea { position: relative; height: 69px; border: 1px solid #c8ced5; border-radius: 3px; padding: 3px 6px; line-height: 24px; font-weight: 500; }
.grip { position: absolute; right: 2px; bottom: 1px; }
.preview { margin: 4px 3px 0 0; line-height: 27px; text-align: right; font-weight: 700; color: #1e88e5; }

.trigger-row { display: flex; justify-content: space-between; height: 35px; line-height: 28px; }
.trigger-row .tool { height: 28px; margin-left: 3px; gap: 5px; }
.auto { display: flex; font-weight: 500; color: #111; }
.check { width: 17px; height: 18px; margin: 7px 5px 0 0; border: 1px solid #d3d7dc; border-radius: 2px; display: flex; align-items: center; justify-content: center; background: #fafbfc; }

.table { height: 78px; border: 1px solid #c8ced5; }
.thead { display: flex; height: 34px; border-bottom: 1px solid #c8ced5; background: #f2f2f2; font-weight: 700; line-height: 29px; text-align: center; white-space: nowrap; }
.thead span { flex: 1; }
.thead .t1 { flex: none; width: 140px; border-right: 1px solid #c8ced5; }
.thead .t2 { flex: none; width: 100px; border-right: 1px solid #c8ced5; }
.view-panel .thead .t1 { width: 154px; }
.empty { display: flex; justify-content: center; gap: 2px; line-height: 37px; font-weight: 500; color: #6b7279; }
.empty svg { margin-top: 14px; }
.view-panel .empty { line-height: 35px; }
.view-panel .empty svg { margin-top: 13px; }

.foot { flex: 1; border-top: 1px solid #c8ced5; padding: 10px 5px 0 7px; }
.run {
  display: flex; justify-content: center; height: 37px; border: 1px solid #1e88e5; border-radius: 3px; background: #2196f3;
  color: #fff; font-weight: 500; line-height: 29px; gap: 7px; padding-left: 6px; box-shadow: 0 1px 2px #0005;
}
.run svg { margin-top: 10px; }

.pairs { display: flex; flex: none; }
.keys { width: 113px; padding-right: 10px; border-right: 1px solid #c8ced5; background: #f2f2f2; text-align: right; }
.vals { flex: 1; padding: 0 7px 0 10px; }
.keys span, .vals span { display: block; height: 26px; line-height: 26px; margin-top: 12px; white-space: nowrap; }
.pairs span:nth-child(2) { margin-top: 7px; }
.pairs span:nth-child(3) { margin-top: 11px; }
.keys .two, .vals .two { height: 52px; margin-top: 13px; }
.vals .two { width: 180px; white-space: normal; }
.vals .field { margin-top: 9px; padding-left: 9px; }
.vals .field + .field { margin-top: 7px; }
.v-p1 { height: 154px; }
.v-p2 { height: 123px; }
.v-p3 { height: 124px; }
.v-p4 { height: 115px; }

.caption { margin: 756px 0 0 14px; font-size: 31.750px; line-height: 45px; color: #ed7d31; white-space: nowrap; }

.frame { position: absolute; border: 2px solid #ed7d31; }
.f2 { left: 761px; top: 283px; width: 313px; height: 267px; }
.f3 { left: 965px; top: 632px; width: 109px; height: 35px; }
.f4 { left: 876px; top: 1064px; width: 91px; height: 64px; }
.f5 { left: 1305px; top: 1px; width: 71px; height: 42px; }
.f6 { left: 1425px; top: 161px; width: 107px; height: 91px; }
.f7 { left: 1219px; top: 659px; width: 313px; height: 469px; }

.badge {
  position: absolute; width: 40px; height: 44px; background: linear-gradient(#f58b4c, #f47920 50%, #e76a14);
  box-shadow: 0 2px 2px #0007; color: #fff; font: 600 38px/44px "Noto Sans", sans-serif; text-align: center;
}
.badge span { display: block; transform: scaleX(.84); }
.b1 { left: 1083px; top: 80px; }
.b2 { left: 1082px; top: 284px; }
.b3 { left: 1083px; top: 625px; height: 46px; }
.b4 { left: 1082px; top: 1059px; height: 45px; }
.b5 { left: 1541px; top: 2px; height: 45px; }
.b6 { left: 1541px; top: 163px; height: 45px; }
.b7 { left: 1540px; top: 660px; height: 45px; }
</style>
